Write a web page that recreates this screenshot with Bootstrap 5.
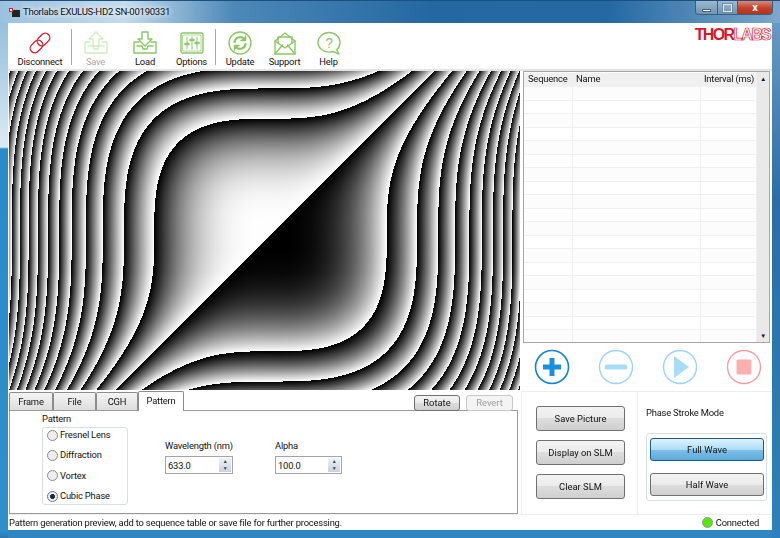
<!DOCTYPE html>
<html lang="en">
<head>
<meta charset="UTF-8">
<title>Thorlabs EXULUS-HD2 SN-00190331</title>
<link href="https://cdn.jsdelivr.net/npm/bootstrap@5.3.2/dist/css/bootstrap.min.css" rel="stylesheet">
<style>
html, body { width: 780px; height: 538px; overflow: hidden; }
body { font-family: Roboto, "Liberation Sans", sans-serif; font-size: 9.4px; letter-spacing: -.2px; color: #111; line-height: 12px; background: #2b7cb6; }
.window { width: 780px; height: 538px; padding: 0 8px 8px 8px;
  background:
    linear-gradient(180deg, #8fb8d8 0, #a8cbe4 60px, #dcebf5 147px, #2b8bc9 149px, #2f8fcb 530px, #2a78b0 538px) left / 8px 100% no-repeat,
    linear-gradient(180deg, #6f9fc6 0, #2a6ea8 200px, #2e80ba 538px) right / 8px 100% no-repeat,
    #2f86c0; }
.titlebar { height: 23px; margin: 0 -8px; padding-left: 9px; border-top: 1px solid #1d4f7c;
  background: linear-gradient(90deg, #9cc1de 0, #c4dbec 16%, #4d88b8 30%, #2468a2 55%, #2569a3 78%, #7ca8ca 100%); }
.title-text { font-size: 9.6px; letter-spacing: -.3px; margin-left: 3px; color: #111; text-shadow: 0 0 6px #fff, 0 0 6px #fff; }
.caption { margin-left: auto; margin-right: 7px; height: 14px; align-self: flex-start; border: 1px solid #3c5f80; border-top: 0; border-radius: 0 0 4px 4px; overflow: hidden; }
.caption span { display: flex; align-items: center; justify-content: center; height: 100%; color: #fff; font-weight: 700; }
.cap-min { width: 22px; background: linear-gradient(180deg, #9db9d0, #6f93b2); border-right: 1px solid #3c5f80; }
.cap-min i { display: block; width: 9px; height: 3px; margin-top: 5px; background: #fff; border: 1px solid #50606e; }
.cap-max { width: 20px; background: linear-gradient(180deg, #9db9d0, #6f93b2); border-right: 1px solid #3c5f80; }
.cap-max i { display: block; width: 9px; height: 8px; border: 1px solid #dfe8ef; box-shadow: 0 0 0 1px #6e8ca5; }
.cap-close { width: 34px; font-size: 11px; background: linear-gradient(180deg, #d98a78, #c23f2a 55%, #b5341f); }
.client { height: 507px; background: #fff; }
.toolbar { height: 48px; padding-left: 1px; border-bottom: 2px solid #e4e4e4; }
.tool { height: 46px; padding-top: 8px; }
.tool svg { display: block; width: 24px; height: 24px; margin: 0 auto 1px; fill: none; stroke: #8cc868; stroke-width: 1.4; stroke-linejoin: round; stroke-linecap: round; }
.tool.off { color: #a8a8a8; }
.tool.off svg { stroke: #d3ebc4; }
.t-disc { width: 62px; } .t-save { width: 47px; } .t-load { width: 52px; } .t-opts { width: 41px; }
.t-upd { width: 48px; } .t-supp { width: 41px; } .t-help { width: 47px; }
.tool-sep { width: 1px; height: 36px; margin-top: 6px; background: #aaa; }
.sep-gap { margin-left: 3px; }
.logo { margin-left: auto; margin-right: 2px; margin-top: 4px; font: 700 16px/1 "Liberation Sans", sans-serif; letter-spacing: -1.7px; color: #d8172c; align-self: flex-start; }
.logo b { color: #fff; -webkit-text-stroke: .7px #d8172c; }
.main { height: 443px; }
.left-col { width: 512px; }
.preview { display: block; width: 511px; height: 319px; margin-left: 1px; }
.tab-row { height: 20px; margin-left: 1px; width: 509px; margin-top: 1px; position: relative; z-index: 1; }
.nav-tabs.win-tabs { border: 0; --bs-nav-tabs-border-width: 0; }
.win-tabs .nav-link, .win-tabs .nav-link.active { height: 18px; margin: 1px 0 0; padding: 3px 0 0; text-align: center; color: #111; font-size: 9.4px; line-height: 12px; background: linear-gradient(180deg, #f4f4f4, #dedede); border: 1px solid #8c8c8c; border-bottom: 0; border-radius: 2px 2px 0 0; }
.win-tabs .nav-link.active { height: 20px; margin-top: 0; padding-top: 3px; background: #fff; }
.w-frame { width: 44px; } .w-file { width: 43px; } .w-cgh { width: 42px; } .w-pattern { width: 46px; }
.btn.win { --bs-btn-font-size: 9.4px; padding: 0; color: #111; line-height: 1; border: 1px solid #707070; border-radius: 3px; background: linear-gradient(180deg, #f3f3f3 0, #ebebeb 50%, #ddd 50%, #cfcfcf 100%); }
.btn.win:disabled { opacity: 1; color: #a0a0a0; border-color: #c8c8c8; background: #f4f4f4; }
.btn.win.on { color: #111; border-color: #1c5a8a; background: linear-gradient(180deg, #e0f2fc 0, #aeddf6 50%, #7fc0e8 50%, #5eaad9 100%); }
.btn-rotate { width: 46px; height: 16px; }
.btn-revert { width: 47px; height: 16px; margin-left: 6px; margin-right: 5px; }
.tab-box { height: 104px; width: 509px; margin-left: 1px; margin-top: -1px; border: 1px solid #9a9a9a; padding: 2px 0 0 32px; }
.group { width: 86px; height: 78px; margin-top: 2px; border: 1px solid #d6e0e6; border-radius: 3px; padding: 0 0 0 4px; }
.radio-row { height: 14px; margin-bottom: 6.4px; }
.form-check-input.win-radio { width: 11px; height: 11px; margin: 0 2px 0 0; border-color: #8a8a8a; background-color: #eee; }
.form-check-input.win-radio:checked { background-color: #eee; background-image: radial-gradient(circle, #123 0, #1d3f5c 2.3px, #eee 2.8px); border-color: #777; }
.spin-col { padding-top: 27px; white-space: nowrap; }
.spin-w { margin-left: 37px; width: 68px; }
.spin-a { margin-left: 42px; width: 67px; }
.spin { height: 18px; margin-top: 4px; border: 1px solid #a4a4a4; }
.spin .form-control { border: 0; border-radius: 0; padding: 0 0 0 2px; font-size: 9.4px; letter-spacing: -.2px; height: 16px; min-height: 0; box-shadow: none; color: #111; }
.spin-btns { width: 12px; margin: 1px; font-size: 5px; line-height: 7px; text-align: center; color: #345; background: linear-gradient(180deg, #eef3f7, #c9d3dc); }
.right-col { width: 250px; margin-left: 3px; }
.seq { height: 272px; width: 247px; border: 1px solid #a8a8a8; }
.seq-table { width: 234px; }
.seq-table table { table-layout: fixed; margin: 0; --bs-table-bg: transparent; font-size: 9.4px; color: #111; }
.seq-table th { height: 14px; padding: 0 0 0 4px; line-height: 12px; vertical-align: top; font-weight: 400; white-space: nowrap; background: #f0f0f0; border: 0; border-top: 1px solid #fff; }
.seq-table td { height: 13.5px; padding: 0; border: 0; border-bottom: 1px solid #f0f0f0; border-right: 1px solid #f0f0f0; }
.seq-table tr:nth-child(odd) td { background: #fcfcfc; }
.scroll { width: 12px; background: #e9e9e9; font-size: 6px; line-height: 13px; text-align: center; color: #111; }
.round-row { height: 48px; padding-left: 11px; gap: 28px; }
.round-row svg { width: 36px; height: 36px; }
.ctl-panel { height: 123px; margin-left: -2px; border-left: 1px solid #eee; border-top: 1px solid #eee; }
.ctl-btns { width: 116px; height: 122px; padding: 14px 0 0 14px; gap: 9px; border-right: 1px solid #eee; }
.ctl-btns .btn { width: 89px; height: 25px; }
.stroke-box { padding: 15px 0 0 8px; }
.stroke-group { width: 121px; height: 68px; margin-top: 14px; border: 1px solid #d6e0e6; border-radius: 3px; padding: 4px 3px; gap: 12px; }
.stroke-group .btn { width: 114px; height: 24px; }
.statusbar { height: 16px; border-top: 1px solid #eee; padding: 0 13px 0 1px; }
.led { width: 11px; height: 11px; border-radius: 50%; margin-right: 3px; background: #55e800; border: 1px solid #999; }
</style>
</head>
<body>
<div class="window d-flex flex-column">
  <div class="titlebar d-flex align-items-center">
    <svg width="11" height="9" viewBox="0 0 11 9"><rect x="3" y="2" width="8" height="7" fill="#222"/><rect x="0" y="0" width="4" height="4" fill="#e0202c"/><rect x="1" y="1" width="2" height="2" fill="#fff"/></svg>
    <span class="title-text">Thorlabs EXULUS-HD2 SN-00190331</span>
    <div class="caption d-flex">
      <span class="cap-min"><i></i></span>
      <span class="cap-max"><i></i></span>
      <span class="cap-close">x</span>
    </div>
  </div>
  <div class="client d-flex flex-column">
    <div class="toolbar d-flex">
      <div class="tool t-disc text-center">
        <svg viewBox="0 0 24 24" style="stroke:#d9232e"><g transform="rotate(-45 12 12)"><rect x="0" y="7.5" width="14" height="9" rx="4.5"/><rect x="10" y="7.5" width="14" height="9" rx="4.5"/></g></svg>
        <div>Disconnect</div>
      </div>
      <div class="tool-sep"></div>
      <div class="tool t-save off text-center">
        <svg viewBox="0 0 24 24"><path d="M6 11H1v11h22V11h-5"/><path d="M4 15h5l1 3h4l1-3h5"/><path d="M12 1l7 7h-4v7H9V8H5z"/></svg>
        <div>Save</div>
      </div>
      <div class="tool t-load text-center">
        <svg viewBox="0 0 24 24"><path d="M6 11H1v11h22V11h-5"/><path d="M4 15h5l1 3h4l1-3h5"/><path d="M9 1h6v7h4l-7 7-7-7h4z"/></svg>
        <div>Load</div>
      </div>
      <div class="tool t-opts text-center">
        <svg viewBox="0 0 24 24"><rect x="1" y="2" width="22" height="20" rx="2"/><rect x="3" y="4" width="18" height="16" stroke-width=".7"/><path d="M7 6v12M12 6v12M17 6v12" stroke-width="1"/><path d="M5.5 13h3M10.500 9h3M15.500 12h3" stroke-width="2.500"/></svg>
        <div>Options</div>
      </div>
      <div class="tool-sep sep-gap"></div>
      <div class="tool t-upd text-center">
        <svg viewBox="0 0 24 24"><circle cx="12" cy="12" r="11"/><path d="M6.500 11a5.600 5.600 0 0 1 9.500-3.200M17.500 13a5.600 5.600 0 0 1-9.500 3.200" stroke-width="2.200"/><path d="M17.500 5v4.500H13M6.500 19v-4.500H11" stroke-width="1.400" fill="#8cc868"/></svg>
        <div>Update</div>
      </div>
      <div class="tool t-supp text-center">
        <svg viewBox="0 0 24 24"><path d="M2 10l10-8 10 8v13H2z"/><path d="M5 12V6h14v6"/><path d="M2 10l10 7 10-7M2 23l7.500-9M22 23l-7.500-9"/></svg>
        <div>Support</div>
      </div>
      <div class="tool t-help text-center">
        <svg viewBox="0 0 24 24"><path d="M12 1.500c6 0 11 4.300 11 10 0 3-1.300 5.500-3.300 7.300L22 23l-6-2.500c-1.200.4-2.600.6-4 .6-6 0-11-4.200-11-9.600s5-10 11-10z"/><text x="12" y="16.500" text-anchor="middle" font-family="Liberation Sans, sans-serif" font-size="14" fill="#8cc868" stroke="none">?</text></svg>
        <div>Help</div>
      </div>
      <div class="logo">THOR<b>LABS</b></div>
    </div>
    <div class="main d-flex">
      <div class="left-col">
        <canvas class="preview" id="preview" width="511" height="319"></canvas>
        <div class="tab-row d-flex align-items-start">
          <ul class="nav nav-tabs win-tabs">
            <li class="nav-item"><a class="nav-link w-frame" href="#">Frame</a></li>
            <li class="nav-item"><a class="nav-link w-file" href="#">File</a></li>
            <li class="nav-item"><a class="nav-link w-cgh" href="#">CGH</a></li>
            <li class="nav-item"><a class="nav-link w-pattern active" href="#">Pattern</a></li>
          </ul>
          <button class="btn win btn-rotate ms-auto mt-1" type="button">Rotate</button>
          <button class="btn win btn-revert mt-1" type="button" disabled>Revert</button>
        </div>
        <div class="tab-box d-flex">
          <div>
            <div>Pattern</div>
            <div class="group">
              <div class="radio-row d-flex align-items-center"><input class="form-check-input win-radio" type="radio" name="pat"><span>Fresnel Lens</span></div>
              <div class="radio-row d-flex align-items-center"><input class="form-check-input win-radio" type="radio" name="pat"><span>Diffraction</span></div>
              <div class="radio-row d-flex align-items-center"><input class="form-check-input win-radio" type="radio" name="pat"><span>Vortex</span></div>
              <div class="radio-row d-flex align-items-center"><input class="form-check-input win-radio" type="radio" name="pat" checked><span>Cubic Phase</span></div>
            </div>
          </div>
          <div class="spin-col spin-w">
            <div>Wavelength (nm)</div>
            <div class="spin d-flex"><input class="form-control" type="text" value="633.0"><div class="spin-btns flex-shrink-0">▲<br>▼</div></div>
          </div>
          <div class="spin-col spin-a">
            <div>Alpha</div>
            <div class="spin d-flex"><input class="form-control" type="text" value="100.0"><div class="spin-btns flex-shrink-0">▲<br>▼</div></div>
          </div>
        </div>
      </div>
      <div class="right-col">
        <div class="seq d-flex">
          <div class="seq-table overflow-hidden">
            <table class="table">
              <colgroup><col style="width:48px"><col style="width:128px"><col></colgroup>
              <thead><tr><th>Sequence</th><th>Name</th><th>Interval (ms)</th></tr></thead>
              <tbody id="seq-rows"></tbody>
            </table>
          </div>
          <div class="scroll d-flex flex-column justify-content-between"><span>▲</span><span>▼</span></div>
        </div>
        <div class="round-row d-flex align-items-center">
          <svg viewBox="0 0 36 36"><circle cx="18" cy="18" r="16.500" fill="#fff" stroke="#0f85cf" stroke-width="1.600"/><path d="M18 9v18M9 18h18" stroke="#1a8fdc" stroke-width="5"/></svg>
          <svg viewBox="0 0 36 36"><circle cx="18" cy="18" r="16.500" fill="#fff" stroke="#9ad4f2" stroke-width="1.400"/><path d="M9 18h18" stroke="#a6dcf5" stroke-width="5" stroke-linecap="round"/></svg>
          <svg viewBox="0 0 36 36"><circle cx="18" cy="18" r="16.500" fill="#fff" stroke="#9ad4f2" stroke-width="1.400"/><path d="M12 7l15 11-15 11z" fill="#a8dcf7"/></svg>
          <svg viewBox="0 0 36 36"><circle cx="18" cy="18" r="16.500" fill="#fff" stroke="#f0a0a5" stroke-width="1.400"/><rect x="10.500" y="10.500" width="15" height="15" rx="1" fill="#fbb0b0"/></svg>
        </div>
        <div class="ctl-panel d-flex">
          <div class="ctl-btns d-flex flex-column flex-shrink-0">
            <button class="btn win" type="button">Save Picture</button>
            <button class="btn win" type="button">Display on SLM</button>
            <button class="btn win" type="button">Clear SLM</button>
          </div>
          <div class="stroke-box">
            <div>Phase Stroke Mode</div>
            <div class="stroke-group d-flex flex-column">
              <button class="btn win on" type="button">Full Wave</button>
              <button class="btn win" type="button">Half Wave</button>
            </div>
          </div>
        </div>
      </div>
    </div>
    <div class="statusbar d-flex align-items-center">
      <span>Pattern generation preview, add to sequence table or save file for further processing.</span>
      <span class="led ms-auto"></span>
      <span>Connected</span>
    </div>
  </div>
</div>
<script>
// empty sequence rows
document.getElementById('seq-rows').innerHTML = '<tr><td></td><td></td><td></td></tr>'.repeat(19);

// cubic phase preview: frac(k * (x^3 + y^3))
const canvas = document.getElementById('preview');
const ctx = canvas.getContext('2d');
const img = ctx.createImageData(canvas.width, canvas.height);
const k = 1 / Math.pow(116.3, 3);
for (let py = 0; py < canvas.height; py++) {
    for (let px = 0; px < canvas.width; px++) {
        const x = px - 261, y = py - 163.5;
        const p = k * (x * x * x + y * y * y);
        const v = Math.floor((p - Math.floor(p)) * 255);
        const i = (py * canvas.width + px) * 4;
        img.data[i] = img.data[i + 1] = img.data[i + 2] = v;
        img.data[i + 3] = 255;
    }
}
ctx.putImageData(img, 0, 0);
</script>
<script src="https://cdn.jsdelivr.net/npm/bootstrap@5.3.2/dist/js/bootstrap.bundle.min.js"></script>
</body>
</html>
